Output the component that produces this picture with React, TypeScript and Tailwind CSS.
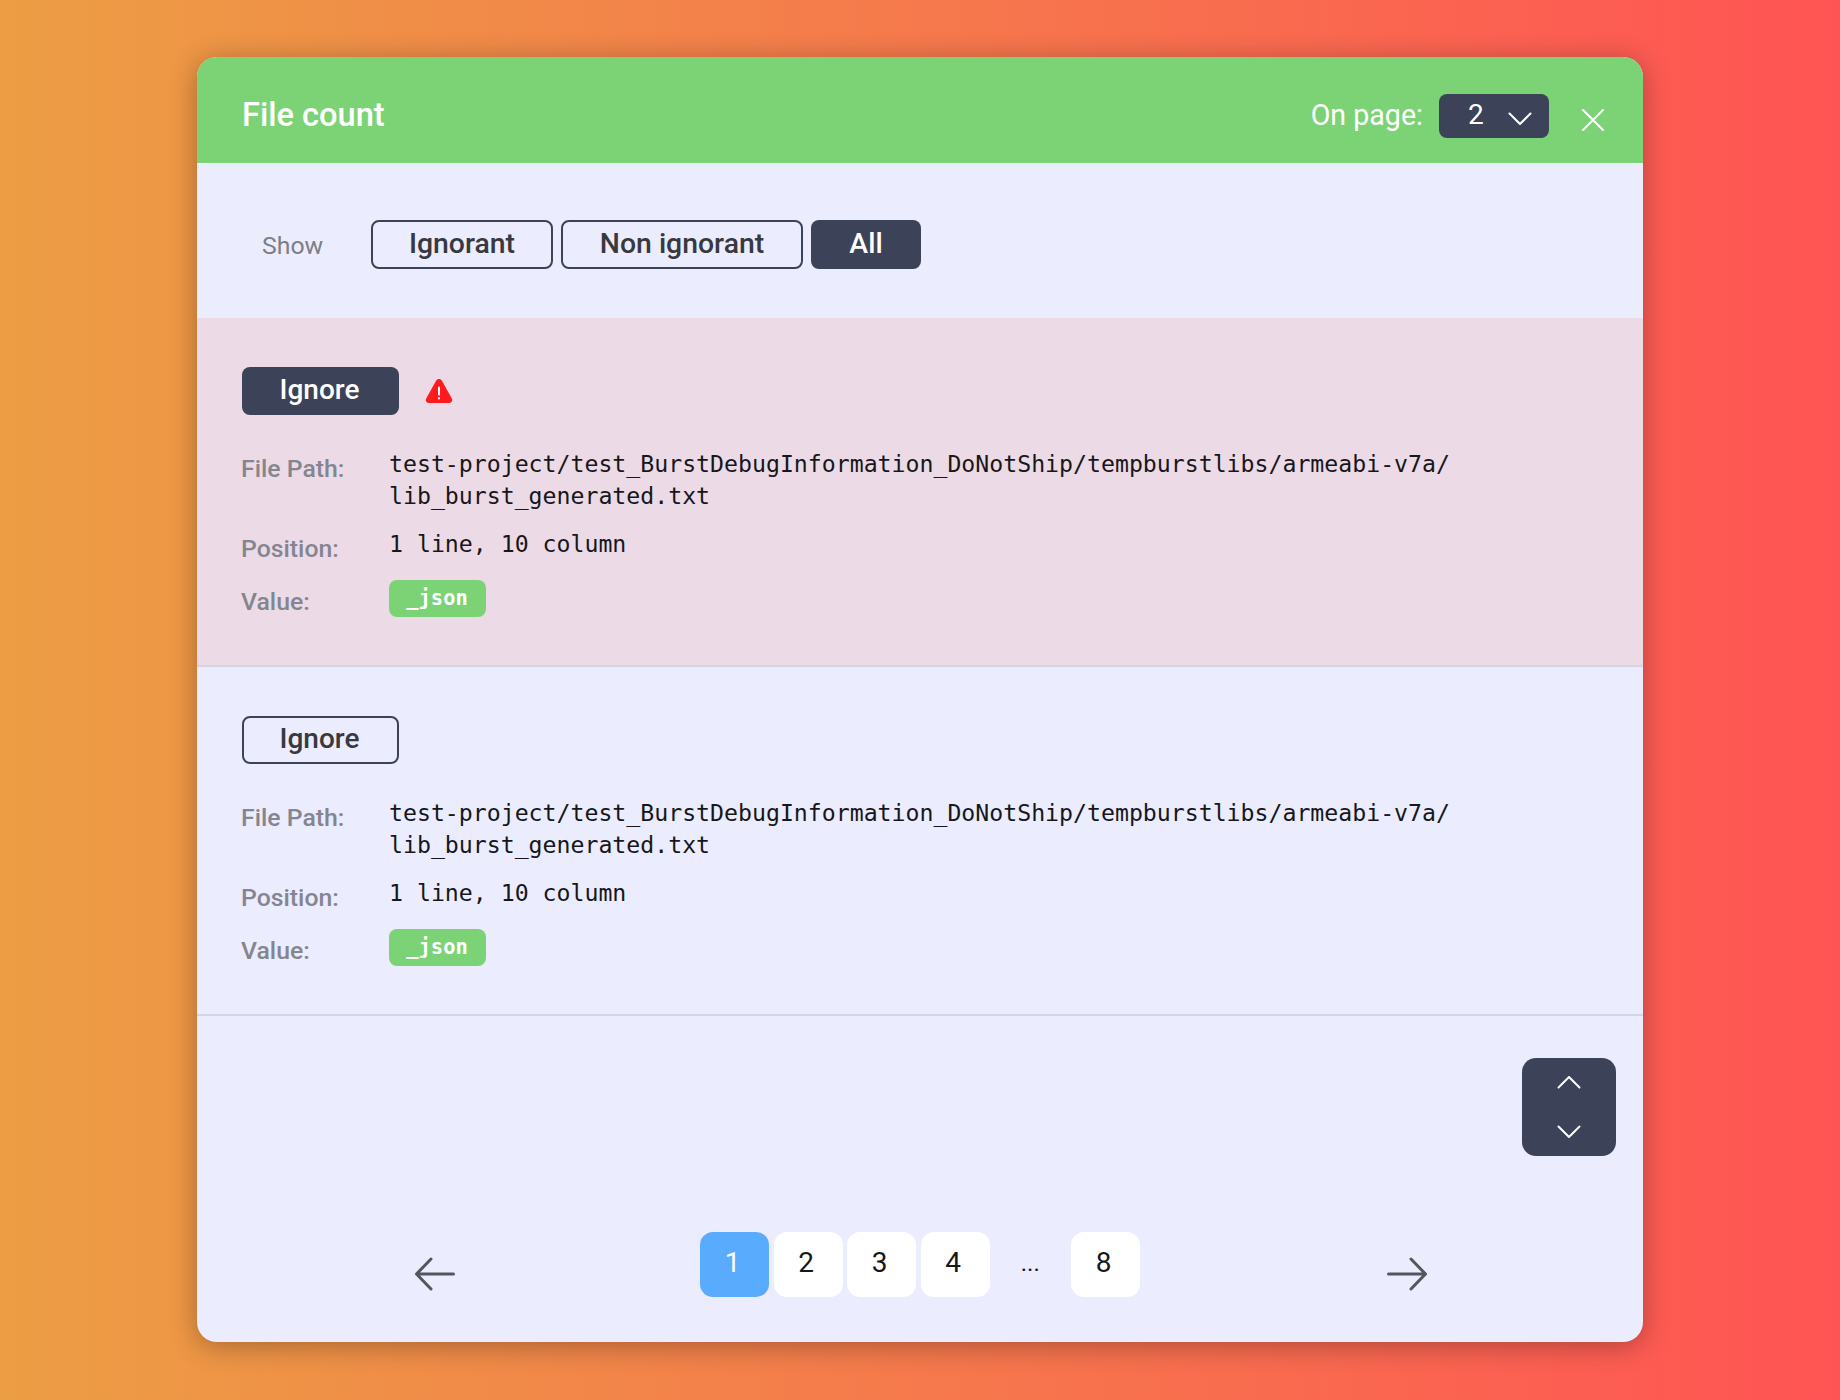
const Chevron = ({ up, className }: { up?: boolean; className: string }) => (
  <svg viewBox="0 0 24 14" fill="none" className={className}>
    <path
      d={up ? "M1.5 12.5 12 2l10.5 10.5" : "M1.5 1.5 12 12 22.5 1.5"}
      stroke="white"
      strokeWidth="2"
      strokeLinecap="round"
      strokeLinejoin="round"
    />
  </svg>
);

const Arrow = ({ right }: { right?: boolean }) => (
  <svg viewBox="0 0 40 34" fill="none" className="mt-[25px] h-[34px] w-[40px]">
    <path
      d={right ? "M1.5 17h37M24 2l14.5 15L24 32" : "M38.5 17h-37M16 2 1.5 17 16 32"}
      stroke="#55565c"
      strokeWidth="3"
      strokeLinecap="round"
      strokeLinejoin="round"
    />
  </svg>
);

const Warning = () => (
  <svg viewBox="0 0 28 26" className="mt-[11px] ml-[26px] h-[26px] w-[28px]">
    <path
      d="M14 1c1.2 0 2.2.6 2.8 1.6l10 18c1.2 2.2-.2 4.4-2.6 4.4H3.8c-2.4 0-3.8-2.2-2.6-4.4l10-18C11.8 1.6 12.8 1 14 1Z"
      fill="#ff1a1f"
    />
    <rect x="13" y="8.5" width="2" height="9" rx="1" fill="white" />
    <rect x="13" y="19" width="2" height="2.4" rx="1" fill="white" />
  </svg>
);

const FileRow = ({ flagged }: { flagged?: boolean }) => (
  <div
    className={`h-[349px] border-b-2 border-[#d3d5e4] pt-[49px] pr-[44px] pl-[45px] ${
      flagged ? "bg-[#ecdbe7]" : ""
    }`}
  >
    <div className="flex items-start">
      <button
        className={`h-[48px] w-[157px] rounded-[8px] pr-[2px] pb-[2px] text-[28px] font-medium ${
          flagged
            ? "bg-[#3c4257] text-white"
            : "border-2 border-[#3c4257] text-[#38393e]"
        }`}
      >
        Ignore
      </button>
      {flagged && <Warning />}
    </div>
    <div className="mt-[33px] flex">
      <div className="-ml-[1px] h-[32px] w-[148px] pt-[5px] text-[24.8px] leading-[32px] font-medium text-[#85858f]">
        File Path:
      </div>
      <div className="font-['DejaVu_Sans_Mono',monospace] text-[23.2px] leading-[32px] text-[#17171a]">
        test-project/test_BurstDebugInformation_DoNotShip/tempburstlibs/armeabi-v7a/
        <br />
        lib_burst_generated.txt
      </div>
    </div>
    <div className="mt-[16px] flex">
      <div className="-ml-[1px] h-[32px] w-[148px] pt-[5px] text-[24.8px] leading-[32px] font-medium text-[#85858f]">
        Position:
      </div>
      <div className="font-['DejaVu_Sans_Mono',monospace] text-[23.2px] leading-[32px] text-[#17171a]">
        1 line, 10 column
      </div>
    </div>
    <div className="mt-[20px] flex items-center">
      <div className="-ml-[1px] h-[32px] w-[148px] pt-[3px] text-[24.8px] leading-[32px] font-medium text-[#85858f]">
        Value:
      </div>
      <div className="flex h-[37px] w-[97px] items-center justify-center rounded-[8px] bg-[#7bd376] pr-[1px] font-['DejaVu_Sans_Mono',monospace] text-[20.4px] font-bold text-white">
        _json
      </div>
    </div>
  </div>
);

const PageButton = ({ label, active }: { label: string; active?: boolean }) => (
  <button
    className={`flex h-[65px] w-[69px] items-center justify-center rounded-[13px] pr-[4px] pb-[3px] text-[28px] ${
      active ? "bg-[#58abfd] text-white" : "bg-white text-[#17171a]"
    }`}
  >
    {label}
  </button>
);

export default function App() {
  return (
    <div className="flex h-[1400px] justify-center bg-linear-to-r/srgb from-[#ec9e44] to-[#ff5454] pt-[57px] font-['Roboto',sans-serif]">
      <div className="h-[1285px] w-[1446px] overflow-hidden rounded-[20px] bg-[#ebecfe] shadow-[0_4px_28px_rgba(0,0,0,0.3)]">
        <header className="flex h-[106px] items-center bg-[#7bd376] pr-[39px] pl-[45px] text-white">
          <h1 className="mt-[11px] text-[32.6px] font-medium">File count</h1>
          <span className="mt-[10px] ml-auto text-[28.6px]">On page:</span>
          <div className="mt-[12px] ml-[16px] flex h-[44px] w-[110px] items-center rounded-[8px] bg-[#3c4257] pb-[2px] pl-[29px] text-[28px]">
            2
            <Chevron className="mt-[8px] ml-[24px] h-[14px] w-[24px]" />
          </div>
          <svg viewBox="0 0 22 22" fill="none" className="mt-[20px] ml-[33px] h-[22px] w-[22px]">
            <path d="M1 1l20 20M21 1 1 21" stroke="white" strokeWidth="2" strokeLinecap="round" />
          </svg>
        </header>

        <div className="flex h-[155px] items-start pt-[57px] pl-[65px]">
          <span className="w-[109px] pt-[7px] text-[24.8px] text-[#7e7e85]">Show</span>
          <div className="flex gap-[8px] text-[28.4px] font-medium">
            <button className="h-[49px] w-[182px] rounded-[8px] border-2 border-[#3c4257] pb-[1px] text-[#38393e]">
              Ignorant
            </button>
            <button className="h-[49px] w-[242px] rounded-[8px] border-2 border-[#3c4257] pb-[1px] text-[#38393e]">
              Non ignorant
            </button>
            <button className="h-[49px] w-[110px] rounded-[8px] bg-[#3c4257] pb-[1px] text-white">All</button>
          </div>
        </div>

        <FileRow flagged />
        <FileRow />

        <div className="flex justify-end pt-[42px] pr-[27px]">
          <div className="flex h-[98px] w-[94px] flex-col items-center justify-center gap-[36px] rounded-[14px] bg-[#3c4257]">
            <Chevron up className="h-[14px] w-[24px]" />
            <Chevron className="h-[14px] w-[24px]" />
          </div>
        </div>

        <nav className="mt-[76px] flex items-start justify-between pr-[216px] pl-[218px]">
          <Arrow />
          <div className="mr-[2px] flex gap-[4.5px]">
            <PageButton label="1" active />
            <PageButton label="2" />
            <PageButton label="3" />
            <PageButton label="4" />
            <span className="flex h-[65px] w-[72.5px] items-center justify-center pb-[3px] text-[24px] text-[#17171a]">
              ...
            </span>
            <PageButton label="8" />
          </div>
          <Arrow right />
        </nav>
      </div>
    </div>
  );
}
